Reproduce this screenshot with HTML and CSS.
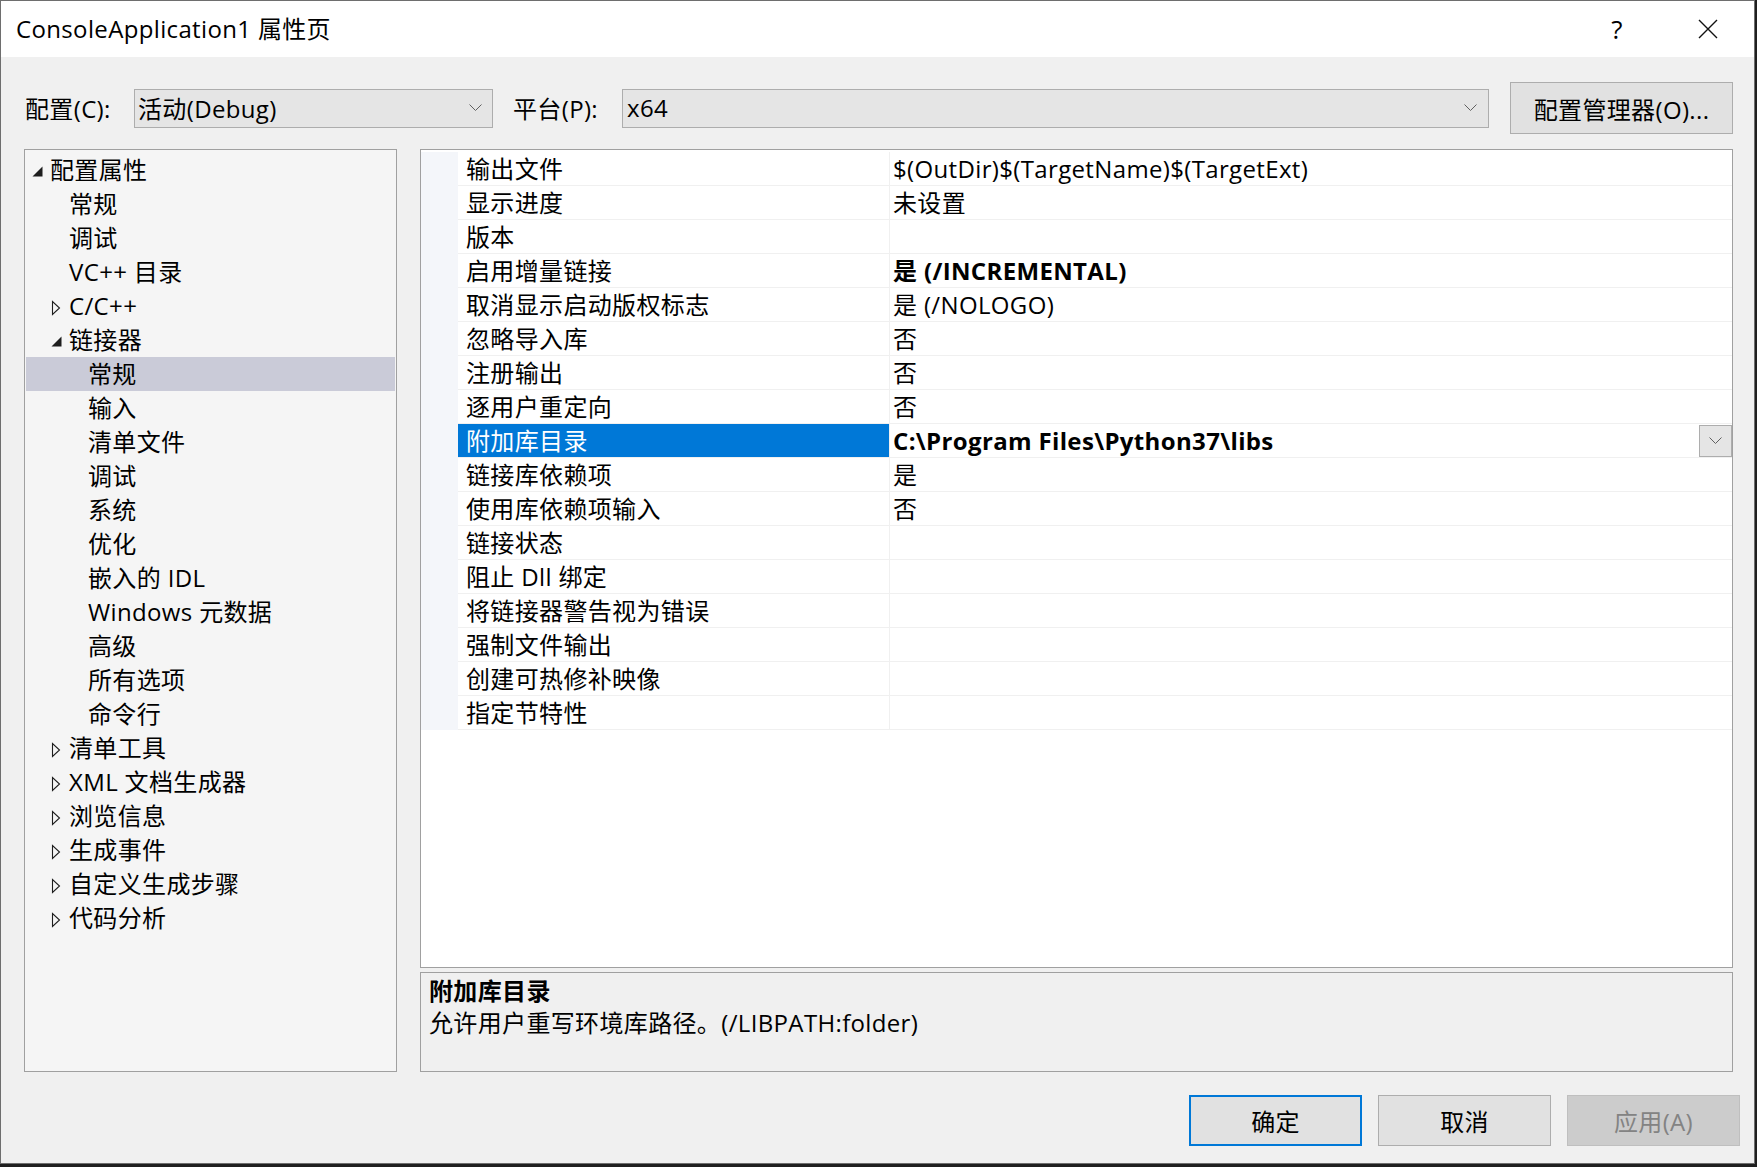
FILE: index.html
```html
<!DOCTYPE html>
<html lang="zh-CN">
<head>
    <meta charset="UTF-8">
    <title>ConsoleApplication1 属性页</title>
    <link rel="stylesheet" href="styles.css">
</head>
<body>
    <div class="dialog">
        <div class="titlebar">
            <span class="title">ConsoleApplication1 属性页</span>
            <span class="help">?</span>
            <span class="close">
                <svg width="20" height="20" viewBox="0 0 20 20"><path d="M1 1 L19 19 M19 1 L1 19" stroke="#111" stroke-width="1.4" fill="none"/></svg>
            </span>
        </div>

        <div class="toolbar">
            <span class="tb-label">配置(C):</span>
            <div class="combo combo-config">
                <span>活动(Debug)</span>
                <svg class="chev" width="13" height="8" viewBox="0 0 13 8"><path d="M0.5 0.5 L6.5 6.5 L12.5 0.5" fill="none" stroke="#606060" stroke-width="1"/></svg>
            </div>
            <span class="tb-label tb-label2">平台(P):</span>
            <div class="combo combo-platform">
                <span>x64</span>
                <svg class="chev" width="13" height="8" viewBox="0 0 13 8"><path d="M0.5 0.5 L6.5 6.5 L12.5 0.5" fill="none" stroke="#606060" stroke-width="1"/></svg>
            </div>
            <button class="btn btn-manager">配置管理器(O)...</button>
        </div>

        <div class="main">
            <div class="tree">
                <div class="node lvl0"><span class="tog"><svg width="11" height="11" viewBox="0 0 11 11"><path d="M10.5 0.5 L10.5 10.5 L0.5 10.5 Z" fill="#1e1e1e"/></svg></span>配置属性</div>
                <div class="node lvl1"><span class="tog"></span>常规</div>
                <div class="node lvl1"><span class="tog"></span>调试</div>
                <div class="node lvl1"><span class="tog"></span>VC++ 目录</div>
                <div class="node lvl1"><span class="tog"><svg width="10" height="16" viewBox="0 0 10 16"><path d="M1.5 1.5 L1.5 14.5 L8.5 8 Z" fill="none" stroke="#1e1e1e" stroke-width="1.1"/></svg></span>C/C++</div>
                <div class="node lvl1"><span class="tog"><svg width="11" height="11" viewBox="0 0 11 11"><path d="M10.5 0.5 L10.5 10.5 L0.5 10.5 Z" fill="#1e1e1e"/></svg></span>链接器</div>
                <div class="node lvl2 selected"><span class="tog"></span>常规</div>
                <div class="node lvl2"><span class="tog"></span>输入</div>
                <div class="node lvl2"><span class="tog"></span>清单文件</div>
                <div class="node lvl2"><span class="tog"></span>调试</div>
                <div class="node lvl2"><span class="tog"></span>系统</div>
                <div class="node lvl2"><span class="tog"></span>优化</div>
                <div class="node lvl2"><span class="tog"></span>嵌入的 IDL</div>
                <div class="node lvl2"><span class="tog"></span>Windows 元数据</div>
                <div class="node lvl2"><span class="tog"></span>高级</div>
                <div class="node lvl2"><span class="tog"></span>所有选项</div>
                <div class="node lvl2"><span class="tog"></span>命令行</div>
                <div class="node lvl1"><span class="tog"><svg width="10" height="16" viewBox="0 0 10 16"><path d="M1.5 1.5 L1.5 14.5 L8.5 8 Z" fill="none" stroke="#1e1e1e" stroke-width="1.1"/></svg></span>清单工具</div>
                <div class="node lvl1"><span class="tog"><svg width="10" height="16" viewBox="0 0 10 16"><path d="M1.5 1.5 L1.5 14.5 L8.5 8 Z" fill="none" stroke="#1e1e1e" stroke-width="1.1"/></svg></span>XML 文档生成器</div>
                <div class="node lvl1"><span class="tog"><svg width="10" height="16" viewBox="0 0 10 16"><path d="M1.5 1.5 L1.5 14.5 L8.5 8 Z" fill="none" stroke="#1e1e1e" stroke-width="1.1"/></svg></span>浏览信息</div>
                <div class="node lvl1"><span class="tog"><svg width="10" height="16" viewBox="0 0 10 16"><path d="M1.5 1.5 L1.5 14.5 L8.5 8 Z" fill="none" stroke="#1e1e1e" stroke-width="1.1"/></svg></span>生成事件</div>
                <div class="node lvl1"><span class="tog"><svg width="10" height="16" viewBox="0 0 10 16"><path d="M1.5 1.5 L1.5 14.5 L8.5 8 Z" fill="none" stroke="#1e1e1e" stroke-width="1.1"/></svg></span>自定义生成步骤</div>
                <div class="node lvl1"><span class="tog"><svg width="10" height="16" viewBox="0 0 10 16"><path d="M1.5 1.5 L1.5 14.5 L8.5 8 Z" fill="none" stroke="#1e1e1e" stroke-width="1.1"/></svg></span>代码分析</div>
            </div>

            <div class="right">
                <div class="grid">
                    <div class="prop"><div class="gutter"></div><div class="pname">输出文件</div><div class="pval">$(OutDir)$(TargetName)$(TargetExt)</div></div>
                    <div class="prop"><div class="gutter"></div><div class="pname">显示进度</div><div class="pval">未设置</div></div>
                    <div class="prop"><div class="gutter"></div><div class="pname">版本</div><div class="pval"></div></div>
                    <div class="prop"><div class="gutter"></div><div class="pname">启用增量链接</div><div class="pval bold">是 (/INCREMENTAL)</div></div>
                    <div class="prop"><div class="gutter"></div><div class="pname">取消显示启动版权标志</div><div class="pval">是 (/NOLOGO)</div></div>
                    <div class="prop"><div class="gutter"></div><div class="pname">忽略导入库</div><div class="pval">否</div></div>
                    <div class="prop"><div class="gutter"></div><div class="pname">注册输出</div><div class="pval">否</div></div>
                    <div class="prop"><div class="gutter"></div><div class="pname">逐用户重定向</div><div class="pval">否</div></div>
                    <div class="prop active"><div class="gutter"></div><div class="pname">附加库目录</div><div class="pval bold">C:\Program Files\Python37\libs<span class="cell-drop"><svg width="13" height="8" viewBox="0 0 13 8"><path d="M0.5 0.5 L6.5 6.5 L12.5 0.5" fill="none" stroke="#606060" stroke-width="1"/></svg></span></div></div>
                    <div class="prop"><div class="gutter"></div><div class="pname">链接库依赖项</div><div class="pval">是</div></div>
                    <div class="prop"><div class="gutter"></div><div class="pname">使用库依赖项输入</div><div class="pval">否</div></div>
                    <div class="prop"><div class="gutter"></div><div class="pname">链接状态</div><div class="pval"></div></div>
                    <div class="prop"><div class="gutter"></div><div class="pname">阻止 Dll 绑定</div><div class="pval"></div></div>
                    <div class="prop"><div class="gutter"></div><div class="pname">将链接器警告视为错误</div><div class="pval"></div></div>
                    <div class="prop"><div class="gutter"></div><div class="pname">强制文件输出</div><div class="pval"></div></div>
                    <div class="prop"><div class="gutter"></div><div class="pname">创建可热修补映像</div><div class="pval"></div></div>
                    <div class="prop"><div class="gutter"></div><div class="pname">指定节特性</div><div class="pval"></div></div>
                </div>
                <div class="desc">
                    <div class="desc-title">附加库目录</div>
                    <div>允许用户重写环境库路径。(/LIBPATH:folder)</div>
                </div>
            </div>
        </div>

        <div class="footer">
            <button class="btn btn-ok">确定</button>
            <button class="btn">取消</button>
            <button class="btn btn-disabled">应用(A)</button>
        </div>
    </div>
</body>
</html>
```

FILE: styles.css
```css
body {
    margin: 0;
    background: #1f1f1f;
    font-family: "Open Sans", "Noto Sans CJK SC", sans-serif;
    font-size: 24px;
    letter-spacing: 0.35px;
    color: #000;
}
.dialog {
    width: 1755px;
    height: 1164px;
    box-sizing: border-box;
    border: 1px solid #6e6e6e;
    background: #f0f0f0;
    display: flex;
    flex-direction: column;
}
.titlebar {
    height: 56px;
    background: #fff;
    display: flex;
    align-items: center;
    padding-left: 15px;
}
.title {
    flex: 1;
    line-height: 56px;
}
.help {
    font-size: 26px;
    width: 30px;
    text-align: center;
    margin-right: 66px;
}
.close {
    width: 20px;
    height: 20px;
    display: flex;
    margin-right: 36px;
}
.toolbar {
    display: flex;
    align-items: center;
    height: 52px;
    margin: 25px 21px 0 24px;
}
.tb-label {
    width: 109px;
    flex-shrink: 0;
    margin-top: -2px;
}
.tb-label2 {
    margin-left: 20px;
}
.combo {
    height: 39px;
    box-sizing: border-box;
    border: 1px solid #adadad;
    background: #e5e5e5;
    display: flex;
    align-items: center;
    padding-left: 3px;
    padding-right: 10px;
}
.combo span {
    flex: 1;
    margin-top: -2px;
}
.combo-config {
    width: 359px;
}
.combo-platform {
    flex: 1;
    padding-left: 4px;
    padding-right: 11px;
}
.btn {
    font-family: "Open Sans", "Noto Sans CJK SC", sans-serif;
    font-size: 24px;
    letter-spacing: 0.35px;
    color: #000;
    background: #e1e1e1;
    border: 1px solid #adadad;
    height: 51px;
    width: 173px;
    padding: 0;
}
.btn-manager {
    width: 223px;
    height: 52px;
    margin-left: 21px;
}
.main {
    display: flex;
    gap: 23px;
    height: 923px;
    margin: 15px 21px 0 23px;
}
.tree {
    width: 373px;
    box-sizing: border-box;
    border: 1px solid #a0a0a0;
    background: #f5f5f5;
    padding: 3px 1px;
}
.node {
    height: 34px;
    line-height: 34px;
    display: flex;
    align-items: center;
    white-space: nowrap;
}
.tog {
    width: 18px;
    flex-shrink: 0;
    display: flex;
    align-items: center;
}
.lvl0 { padding-left: 6px; }
.lvl1 { padding-left: 25px; }
.lvl2 { padding-left: 44px; }
.lvl0 .tog svg, .lvl1 .tog svg { margin-top: 3px; }
.selected {
    background: #cacbd8;
}
.right {
    flex: 1;
    display: flex;
    flex-direction: column;
    gap: 4px;
}
.grid {
    height: 819px;
    box-sizing: border-box;
    border: 1px solid #a0a0a0;
    background: #fff;
    padding-top: 2px;
}
.prop {
    display: flex;
    height: 34px;
    line-height: 33px;
    white-space: nowrap;
}
.gutter {
    width: 37px;
    flex-shrink: 0;
    background: #f4f6fa;
}
.pname {
    width: 432px;
    flex-shrink: 0;
    box-sizing: border-box;
    padding-left: 8px;
    border-bottom: 1px solid #f0f0f0;
    border-right: 1px solid #f0f0f0;
}
.pval {
    flex: 1;
    padding-left: 3px;
    border-bottom: 1px solid #f0f0f0;
    display: flex;
}
.bold {
    font-weight: bold;
}
.active .pname {
    background: #0078d7;
    color: #fff;
}
.cell-drop {
    margin-left: auto;
    width: 33px;
    height: 32px;
    box-sizing: border-box;
    border: 1px solid #adadad;
    background: #e5e5e5;
    display: flex;
    align-items: center;
    justify-content: center;
    margin-top: 1px;
}
.desc {
    flex: 1;
    box-sizing: border-box;
    border: 1px solid #a0a0a0;
    background: #f0f0f0;
    padding: 2px 8px;
    line-height: 32px;
}
.desc-title {
    font-weight: bold;
}
.footer {
    display: flex;
    justify-content: flex-end;
    gap: 16px;
    padding: 23px 14px 0 0;
}
.btn-ok {
    border: 2px solid #0078d7;
}
.btn-disabled {
    background: #cccccc;
    border-color: #bfbfbf;
    color: #838383;
}
```
